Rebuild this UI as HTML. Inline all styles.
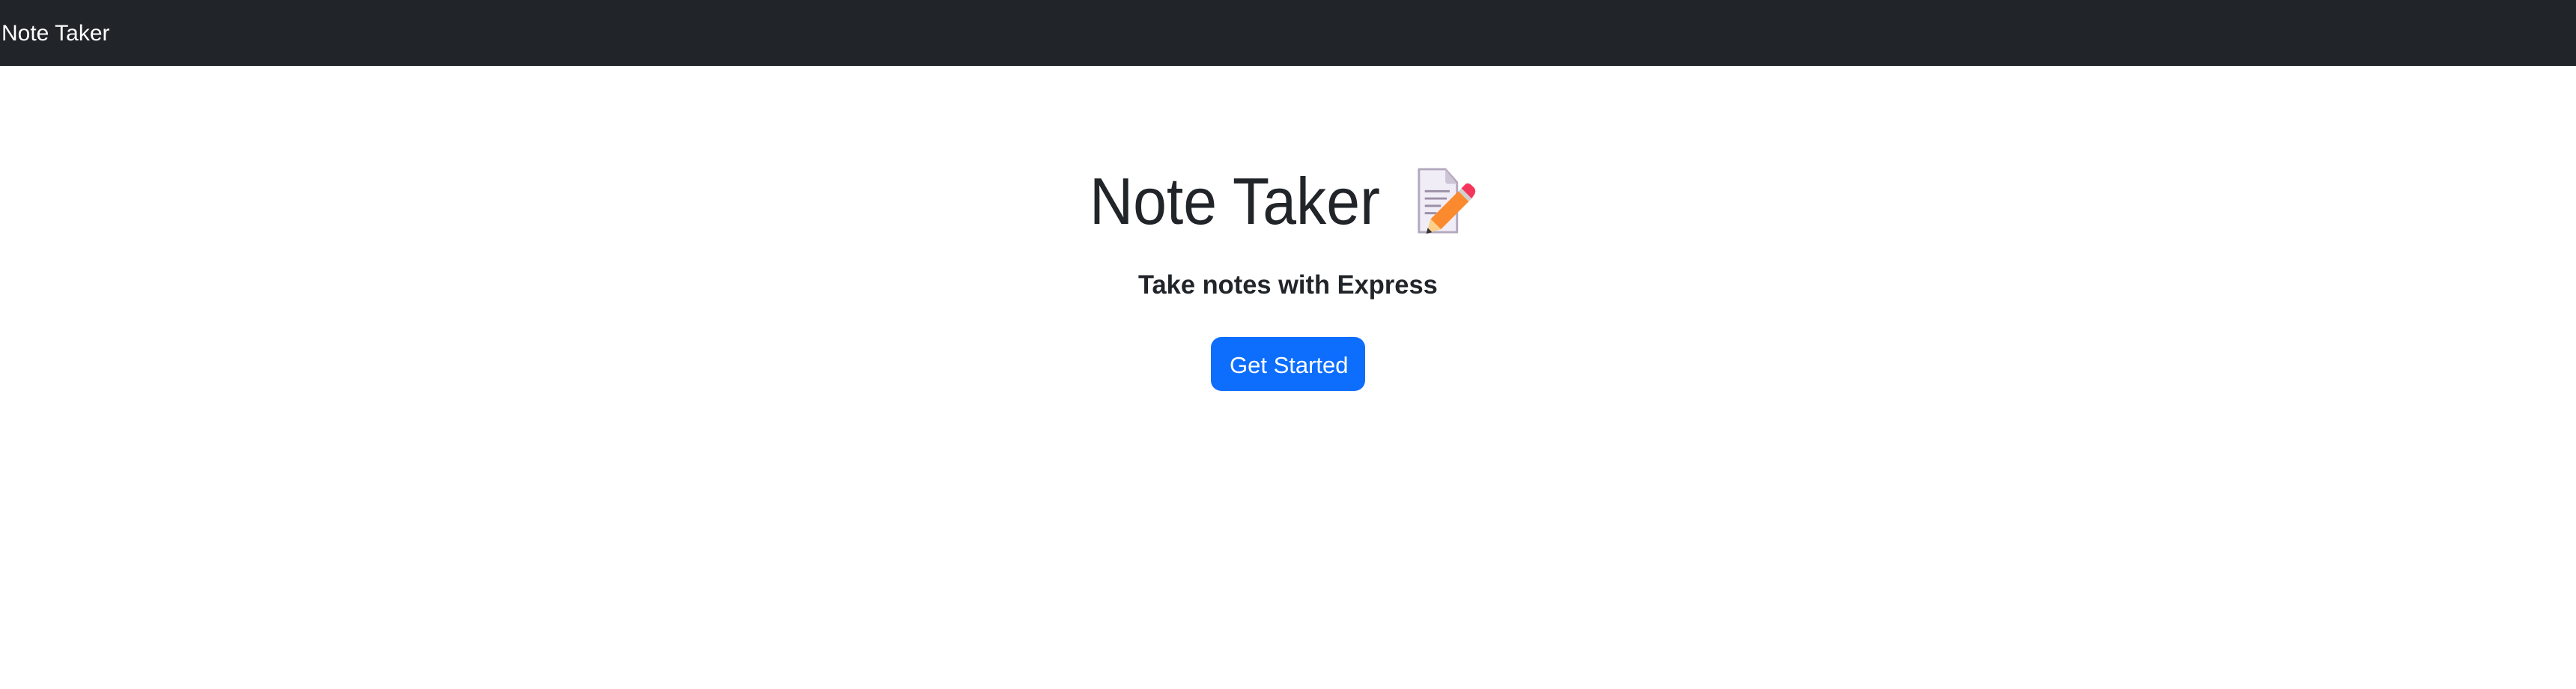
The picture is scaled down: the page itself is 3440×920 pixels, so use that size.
<!DOCTYPE html>
<html><head><meta charset="utf-8"><style>
html,body{margin:0;padding:0;width:3440px;height:920px;background:#fff;overflow:hidden;font-family:"Liberation Sans","DejaVu Sans",sans-serif;color:#212529}
.nav{height:88px;background:#212529;position:relative}
.nav span{position:absolute;left:2px;top:23px;font-size:30px;color:#fff;line-height:44px}
.t{position:absolute;left:1455px;top:214px;font-size:88px;font-weight:300;line-height:110px;white-space:nowrap;transform:scaleX(0.915);transform-origin:left}
.ic{position:absolute;left:1889px;top:224px}
.s{position:absolute;left:1520px;top:356px;font-size:35px;font-weight:bold;line-height:50px;white-space:nowrap;transform:scaleX(0.985);transform-origin:left}
.b{position:absolute;left:1617px;top:450px;width:206px;height:72px;background:#0d6efd;border-radius:14px}
.b span{position:absolute;left:25px;top:2px;font-size:31px;line-height:72px;color:#fff;white-space:nowrap}
</style></head><body>
<div class="nav"><span>Note Taker</span></div>
<div class="t">Note Taker</div>
<svg class="ic" width="88" height="90" viewBox="0 0 90 92" preserveAspectRatio="none">
<path d="M6 2 H42 L58 20 V88 H6 Z" fill="#f1edf7" stroke="#b3a8bd" stroke-width="3" stroke-linejoin="round"/>
<path d="M42 2 V18 Q42 22 46 22 H58" fill="#cdc4d6"/>
<g stroke="#9b8fa6" stroke-width="3"><line x1="14" y1="32" x2="48" y2="32"/><line x1="14" y1="42" x2="44" y2="42"/><line x1="14" y1="52" x2="36" y2="52"/><line x1="14" y1="62" x2="30" y2="62"/></g>
<path d="M22 70 L60 32 L74 46 L36 84 Z" fill="#fa8a2d"/>
<path d="M60 32 L64 28 L78 42 L74 46 Z" fill="#d0d0d0"/>
<path d="M64 28 L70 22 Q74 20 78 24 L82 28 Q84 32 82 36 L78 42 Z" fill="#f5365c"/>
<path d="M22 70 L36 84 L16 90 Z" fill="#fcd08a"/>
<path d="M18 82 L24 88 L16 90 Z" fill="#333"/>
</svg>
<div class="s">Take notes with Express</div>
<div class="b"><span>Get Started</span></div>
</body></html>
